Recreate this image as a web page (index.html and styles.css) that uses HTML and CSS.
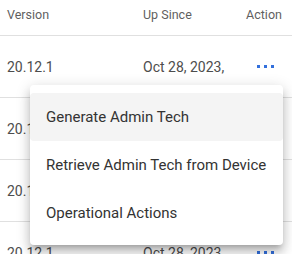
FILE: index.html
```html
<!DOCTYPE html>
<html>
<head>
<meta charset="utf-8">
<link rel="stylesheet" href="styles.css">
</head>
<body>
<div class="table">
  <div class="row head">
    <div class="c ver">Version</div>
    <div class="c up">Up Since</div>
    <div class="c act">Action</div>
  </div>
  <div class="row">
    <div class="c ver">20.12.1</div>
    <div class="c up">Oct 28, 2023,</div>
    <div class="c act"><span class="dots"><i></i><i></i><i></i></span></div>
  </div>
  <div class="row">
    <div class="c ver">20.12.1</div>
    <div class="c up">Oct 28, 2023,</div>
    <div class="c act"><span class="dots"><i></i><i></i><i></i></span></div>
  </div>
  <div class="row">
    <div class="c ver">20.12.1</div>
    <div class="c up">Oct 28, 2023,</div>
    <div class="c act"><span class="dots"><i></i><i></i><i></i></span></div>
  </div>
  <div class="row">
    <div class="c ver">20.12.1</div>
    <div class="c up">Oct 28, 2023,</div>
    <div class="c act"><span class="dots"><i></i><i></i><i></i></span></div>
  </div>
</div>
<div class="menu">
  <div class="item active">Generate Admin Tech</div>
  <div class="item">Retrieve Admin Tech from Device</div>
  <div class="item">Operational Actions</div>
</div>
</body>
</html>
```
FILE: styles.css
```css
html, body {
  margin: 0;
  padding: 0;
  background: #fff;
  overflow: hidden;
  font-family: Roboto, "Liberation Sans", sans-serif;
}
.table {
  width: 292px;
}
.row {
  display: flex;
  align-items: center;
  height: 61px;
  border-bottom: 1px solid #e0e0e0;
  font-size: 14px;
  color: #4d4d4d;
}
.row.head {
  height: 29px;
  padding-bottom: 6px;
  font-size: 12.5px;
  color: #5f5f5f;
}
.c.ver {
  width: 136px;
  padding-left: 7px;
}
.c.up {
  flex: 1;
}
.c.act {
  width: 46px;
  padding-right: 5px;
  display: flex;
  justify-content: center;
}
.dots {
  display: flex;
  gap: 4px;
  padding-left: 2px;
}
.dots i {
  display: block;
  width: 3px;
  height: 3px;
  background: #3370dc;
}
.menu {
  position: absolute;
  left: 30px;
  top: 85px;
  width: 253px;
  padding: 8px 0;
  background: #fff;
  border-radius: 4px;
  box-shadow: 0 5px 5px -3px rgba(0,0,0,.2), 0 8px 10px 1px rgba(0,0,0,.14), 0 3px 14px 2px rgba(0,0,0,.12);
}
.item {
  height: 48px;
  display: flex;
  align-items: center;
  padding-left: 16px;
  font-size: 15px;
  color: #333;
  border-radius: 4px;
}
.item.active {
  background: #f4f4f4;
}
```
